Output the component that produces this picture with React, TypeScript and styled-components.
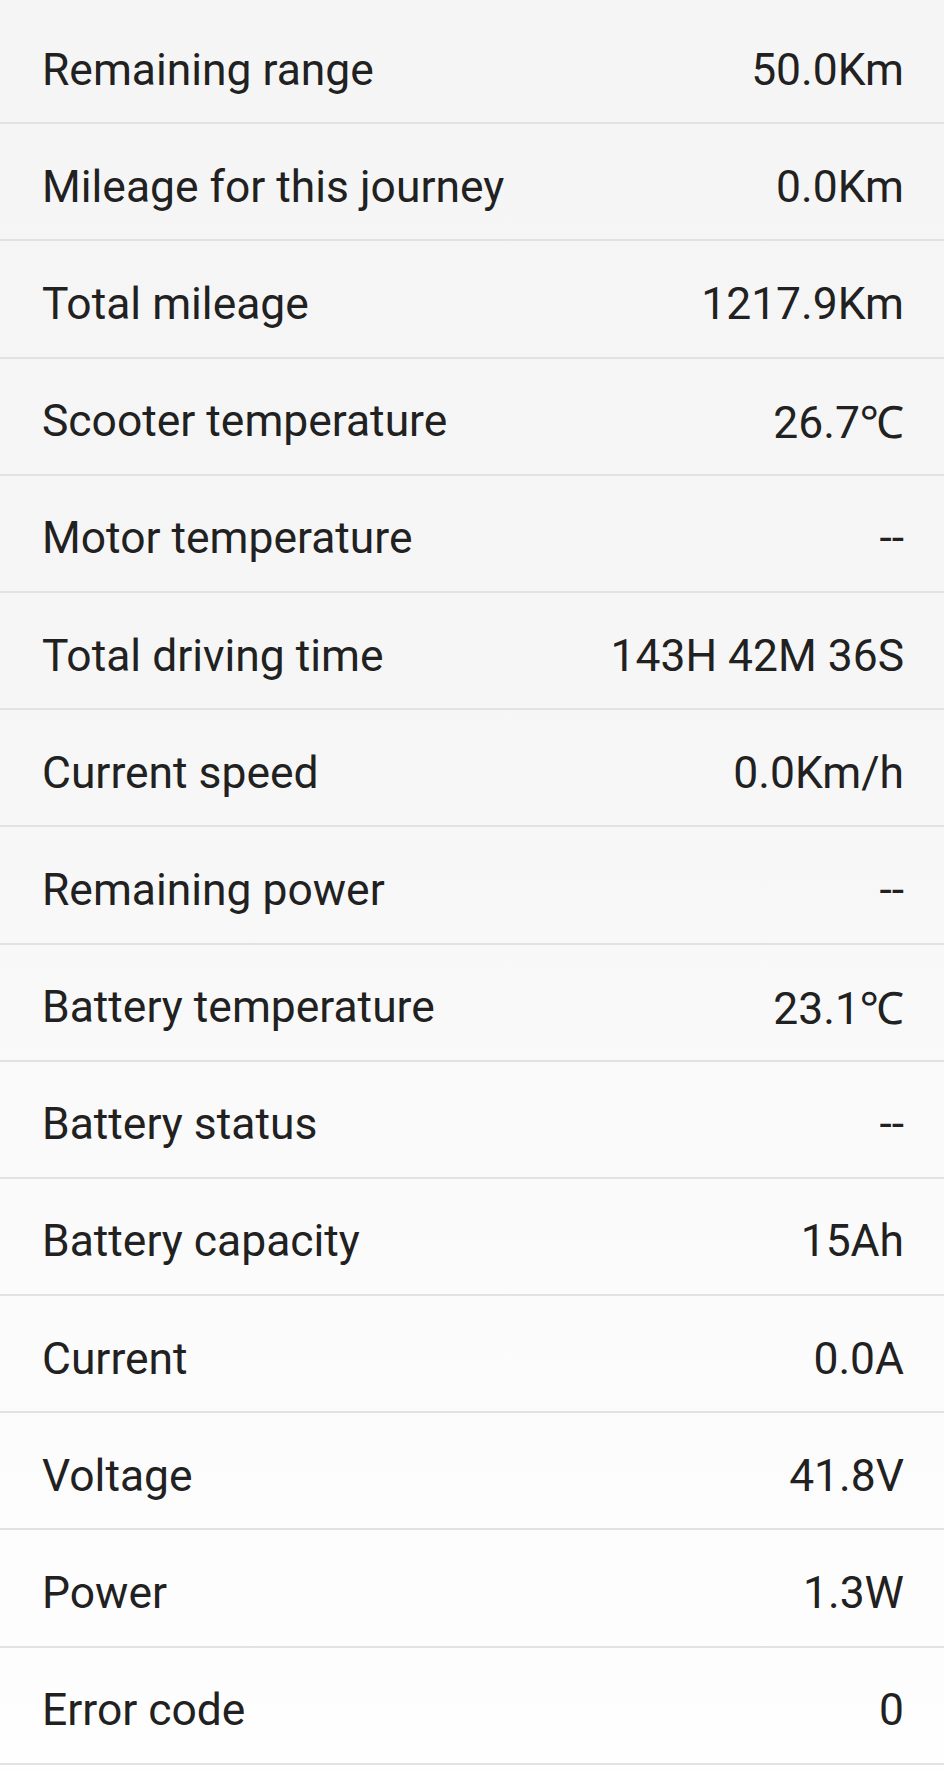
import React from "react"
import styled, { createGlobalStyle } from "styled-components"

const GlobalStyle = createGlobalStyle`
  html, body {
    margin: 0;
    padding: 0;
    background: #fefefe;
  }
  body {
    font-family: Roboto, "Noto Sans", "Liberation Sans", sans-serif;
    -webkit-font-smoothing: antialiased;
  }
`

const List = styled.div`
  width: 944px;
  height: 1771px;
  box-sizing: border-box;
  padding-top: 7px;
  overflow: hidden;
  background: linear-gradient(to bottom, #f5f5f5 0%, #f6f6f6 40%, #fafafa 65%, #fefefe 100%);
`

const Row = styled.div`
  height: 117.2px;
  box-sizing: border-box;
  padding: 10px 40px 0 42px;
  display: flex;
  align-items: center;
  justify-content: space-between;
  border-bottom: 2px solid #e2e2e2;
`

const Label = styled.span`
  font-size: 44.4px;
  line-height: normal;
  color: #212121;
`

const Value = styled.span`
  font-size: 44.4px;
  line-height: normal;
  color: #212121;
  text-align: right;
`

interface Stat {
  label: string
  value: string
}

const stats: Stat[] = [
  { label: "Remaining range", value: "50.0Km" },
  { label: "Mileage for this journey", value: "0.0Km" },
  { label: "Total mileage", value: "1217.9Km" },
  { label: "Scooter temperature", value: "26.7℃" },
  { label: "Motor temperature", value: "--" },
  { label: "Total driving time", value: "143H 42M 36S" },
  { label: "Current speed", value: "0.0Km/h" },
  { label: "Remaining power", value: "--" },
  { label: "Battery temperature", value: "23.1℃" },
  { label: "Battery status", value: "--" },
  { label: "Battery capacity", value: "15Ah" },
  { label: "Current", value: "0.0A" },
  { label: "Voltage", value: "41.8V" },
  { label: "Power", value: "1.3W" },
  { label: "Error code", value: "0" },
]

const App = () => {
  return (
    <>
      <GlobalStyle />
      <List>
        {stats.map(stat => (
          <Row key={stat.label}>
            <Label>{stat.label}</Label>
            <Value>{stat.value}</Value>
          </Row>
        ))}
      </List>
    </>
  )
}

export default App
